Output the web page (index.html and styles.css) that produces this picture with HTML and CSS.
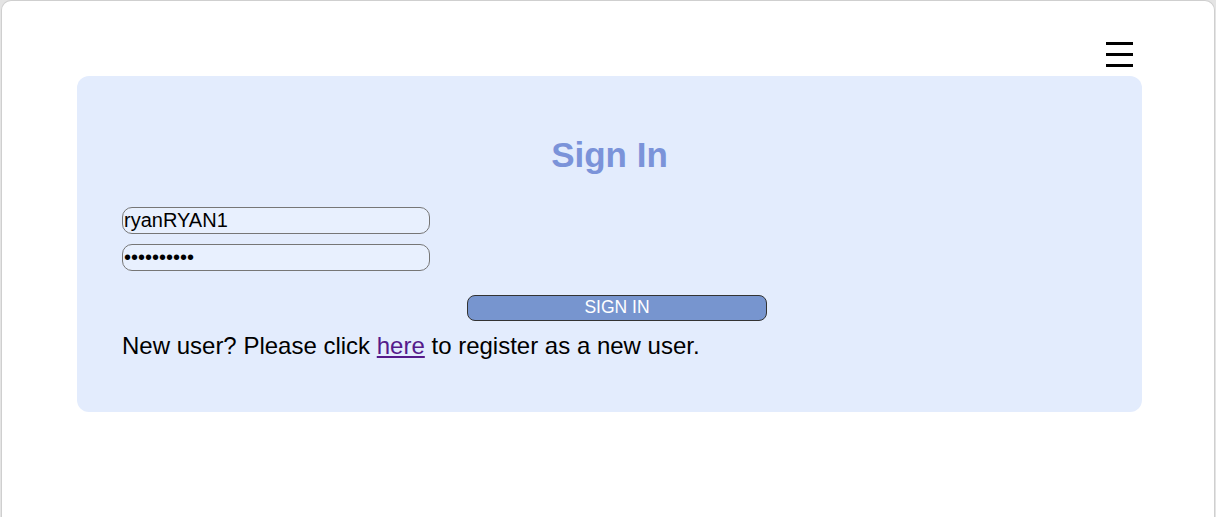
FILE: index.html
```html
<!DOCTYPE html>
<html lang="en">
<head>
<meta charset="utf-8">
<title>Sign In</title>
<link rel="stylesheet" href="styles.css">
</head>
<body>
<div class="frame">
  <header class="topbar">
    <button class="menu" aria-label="Menu">
      <svg width="28" height="27" viewBox="0 0 28 27" aria-hidden="true">
        <rect x="1" y="1" width="27" height="3" fill="#000"/>
        <rect x="1" y="12" width="27" height="3" fill="#000"/>
        <rect x="1" y="23" width="27" height="3" fill="#000"/>
      </svg>
    </button>
  </header>
  <main class="card">
    <h1 class="title">Sign In</h1>
    <form class="form">
      <input class="field" type="text" value="ryanRYAN1">
      <input class="field" type="password" value="1234567890">
      <button class="submit" type="button">SIGN IN</button>
    </form>
    <p class="note">New user? Please click <a class="link" href="#">here</a> to register as a new user.</p>
  </main>
</div>
</body>
</html>
```

FILE: styles.css
```css
html, body {
  margin: 0;
  padding: 0;
  background: #e4e4e4;
  font-family: "Liberation Sans", Arial, sans-serif;
}

.frame {
  margin-left: 1px;
  margin-right: 1px;
  min-height: 540px;
  background: #ffffff;
  border: 1px solid #cfcfcf;
  border-bottom: none;
  border-radius: 10px 10px 0 0;
}

.topbar {
  display: flex;
  justify-content: flex-end;
  padding: 40px 81px 0 0;
  height: 27px;
}

.menu {
  border: none;
  background: none;
  padding: 0;
  margin: 0;
  width: 28px;
  height: 27px;
  display: block;
}

.menu svg {
  display: block;
}

.card {
  margin: 8px 72px 0 75px;
  background: #e3ecfd;
  border-radius: 12px;
  padding: 59px 45px 53px 45px;
}

.title {
  margin: 0;
  text-align: center;
  font-size: 35px;
  line-height: 40px;
  font-weight: bold;
  color: #7b93d9;
}

.form {
  display: flex;
  flex-direction: column;
  align-items: flex-start;
  margin-top: 32px;
}

.field {
  box-sizing: border-box;
  width: 308px;
  height: 27px;
  margin: 0 0 10px 0;
  padding: 0 2px 0 1px;
  border: 1px solid #767676;
  border-radius: 10px;
  background: #e8f0fe;
  font-family: "Liberation Sans", Arial, sans-serif;
  font-size: 20px;
  color: #000;
}

.field[type="password"] {
  margin-bottom: 24px;
}

.submit {
  box-sizing: border-box;
  width: 300px;
  height: 26px;
  margin-left: 345px;
  padding: 0 0 2px 0;
  border: 1px solid #333;
  border-radius: 8px;
  background: #7795cf;
  color: #fff;
  font-family: "Liberation Sans", Arial, sans-serif;
  font-size: 17.5px;
  line-height: 22px;
}

.note {
  margin: 11px 0 0 0;
  font-size: 24px;
  line-height: 27px;
  color: #000;
}

.link {
  color: #551a8b;
}
```
